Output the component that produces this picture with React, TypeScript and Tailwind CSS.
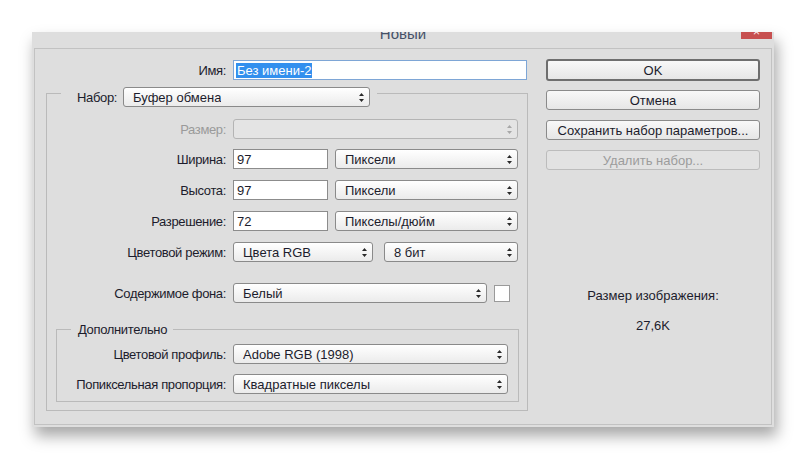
import React from "react";

const font = "font-['Liberation_Sans',Arial,sans-serif]";

const Arrows: React.FC<{ disabled?: boolean }> = ({ disabled }) => (
  <svg width="5" height="9" viewBox="0 0 5 9" className="shrink-0">
    <path d="M2.5 0 L5 3 L0 3 Z M0 6 L5 6 L2.5 9 Z" fill={disabled ? "#a8a8a8" : "#2a2a2a"} />
  </svg>
);

const Select: React.FC<{ value?: string; w: string; disabled?: boolean }> = ({
  value,
  w,
  disabled,
}) => (
  <div
    className={`${w} h-[20px] flex items-center justify-between pl-[9px] pr-[5px] rounded-[3px] border ${
      disabled
        ? "border-[#b4b4b4] bg-[#e4e4e4]"
        : "border-[#8a8a8a] bg-gradient-to-b from-white to-[#ebebeb]"
    }`}
  >
    <span className="text-[#1c1c2c] truncate">{value}</span>
    <Arrows disabled={disabled} />
  </div>
);

const Input: React.FC<{ value: string; w: string }> = ({ value, w }) => (
  <div className={`${w} h-[20px] flex items-center px-[3px] bg-white border border-[#8c8c8c]`}>
    <span className="text-[#1c1c2c]">{value}</span>
  </div>
);

// labels in the original font run a little narrower
const Row: React.FC<{ label: string; lw: string; mt: string; disabled?: boolean; children: React.ReactNode }> = ({
  label,
  lw,
  mt,
  disabled,
  children,
}) => (
  <div className={`flex items-center h-[20px] ${mt}`}>
    <div className={`${lw} text-right tracking-[-0.35px] ${disabled ? "text-[#9a9a9a]" : "text-[#1c1c2c]"}`}>
      {label}
    </div>
    <div className="flex items-center ml-[7px]">{children}</div>
  </div>
);

const Button: React.FC<{ label: string; def?: boolean; disabled?: boolean; mt?: string }> = ({
  label,
  def,
  disabled,
  mt = "",
}) => (
  <div
    className={`${mt} w-[214px] flex items-center justify-center rounded-[3px] ${
      def
        ? "h-[22px] border-2 border-[#6e6e6e] bg-gradient-to-b from-[#f8f8f8] to-[#e6e6e6] text-[#1c1c2c]"
        : disabled
        ? "h-[20px] border border-[#bcbcbc] bg-[#e2e2e2] text-[#9c9c9c]"
        : "h-[20px] border border-[#8a8a8a] bg-gradient-to-b from-[#f8f8f8] to-[#e6e6e6] text-[#1c1c2c]"
    }`}
  >
    {label}
  </div>
);

export default function App() {
  return (
    <div className={`w-[806px] h-[462px] bg-white overflow-hidden pt-[32px] pl-[32px] text-[13px] leading-[15px] ${font}`}>
      <div className="w-[742px] h-[395px] bg-[#dedede] overflow-hidden flex flex-col shadow-[3px_9px_14px_rgba(0,0,0,0.35)]">
        {/* title bar */}
        <div className="h-[16px] grid grid-cols-[1fr_auto_1fr]">
          <div />
          <div className="-mt-[6px] text-[15px] leading-[16px] text-[#455168]">Новый</div>
          <div className="flex justify-end pr-[2px]">
            <div className="w-[31px] h-[7px] bg-[#c75050] flex justify-center overflow-hidden">
              <span className="text-white text-[12px] leading-[12px] -mt-[6px]">×</span>
            </div>
          </div>
        </div>

        {/* content */}
        <div className="mx-[2px] h-[377px] border border-[#c2c2c2] flex pt-[11px]">
          <div className="w-[493px]">
            <div className="flex items-center h-[20px]">
              <div className="w-[191px] text-right text-[#1c1c2c] tracking-[-0.35px]">Имя:</div>
              <div className="ml-[7px] w-[294px] h-[20px] flex items-center px-[2px] bg-white border border-[#7ea6d6]">
                <span className="bg-[#3390ee] text-white px-[1px]">Без имени-2</span>
              </div>
            </div>

            <fieldset className="ml-[11px] w-[482px] -mt-[1px] border border-[#bababa] pb-[8px]">
              <legend className="ml-[14px] pl-[16px] pr-[7px] pt-[8px]">
                <div className="flex items-center">
                  <span className="text-[#1c1c2c] tracking-[-0.35px]">Набор:</span>
                  <div className="ml-[6px]">
                    <Select value="Буфер обмена" w="w-[247px]" />
                  </div>
                </div>
              </legend>

              <Row label="Размер:" lw="w-[179px]" mt="mt-[12px]" disabled>
                <Select w="w-[285px]" disabled />
              </Row>
              <Row label="Ширина:" lw="w-[179px]" mt="mt-[10px]">
                <Input value="97" w="w-[95px]" />
                <div className="ml-[7px]">
                  <Select value="Пиксели" w="w-[183px]" />
                </div>
              </Row>
              <Row label="Высота:" lw="w-[179px]" mt="mt-[11px]">
                <Input value="97" w="w-[95px]" />
                <div className="ml-[7px]">
                  <Select value="Пиксели" w="w-[183px]" />
                </div>
              </Row>
              <Row label="Разрешение:" lw="w-[179px]" mt="mt-[11px]">
                <Input value="72" w="w-[95px]" />
                <div className="ml-[7px]">
                  <Select value="Пикселы/дюйм" w="w-[183px]" />
                </div>
              </Row>
              <Row label="Цветовой режим:" lw="w-[179px]" mt="mt-[11px]">
                <Select value="Цвета RGB" w="w-[140px]" />
                <div className="ml-[11px]">
                  <Select value="8 бит" w="w-[134px]" />
                </div>
              </Row>
              <Row label="Содержимое фона:" lw="w-[179px]" mt="mt-[21px]">
                <Select value="Белый" w="w-[254px]" />
                <div className="ml-[7px] w-[16px] h-[17px] bg-white border border-[#9a9a9a]" />
              </Row>

              <fieldset className="ml-[9px] mt-[19px] w-[463px] border border-[#bababa] pb-[7px]">
                <legend className="ml-[14px] pl-[7px] pr-[6px] text-[#1c1c2c] tracking-[-0.35px]">Дополнительно</legend>
                <Row label="Цветовой профиль:" lw="w-[169px]" mt="mt-[7px]">
                  <Select value="Adobe RGB (1998)" w="w-[275px]" />
                </Row>
                <Row label="Попиксельная пропорция:" lw="w-[169px]" mt="mt-[10px]">
                  <Select value="Квадратные пикселы" w="w-[275px]" />
                </Row>
              </fieldset>
            </fieldset>
          </div>

          <div className="ml-[18px] w-[214px] -mt-[1px] flex flex-col">
            <Button label="OK" def />
            <Button label="Отмена" mt="mt-[9px]" />
            <Button label="Сохранить набор параметров..." mt="mt-[10px]" />
            <Button label="Удалить набор..." mt="mt-[10px]" disabled />
            <div className="mt-[118px] text-center text-[#1c1c2c]">Размер изображения:</div>
            <div className="mt-[15px] text-center text-[#1c1c2c]">27,6K</div>
          </div>
        </div>
      </div>
    </div>
  );
}
